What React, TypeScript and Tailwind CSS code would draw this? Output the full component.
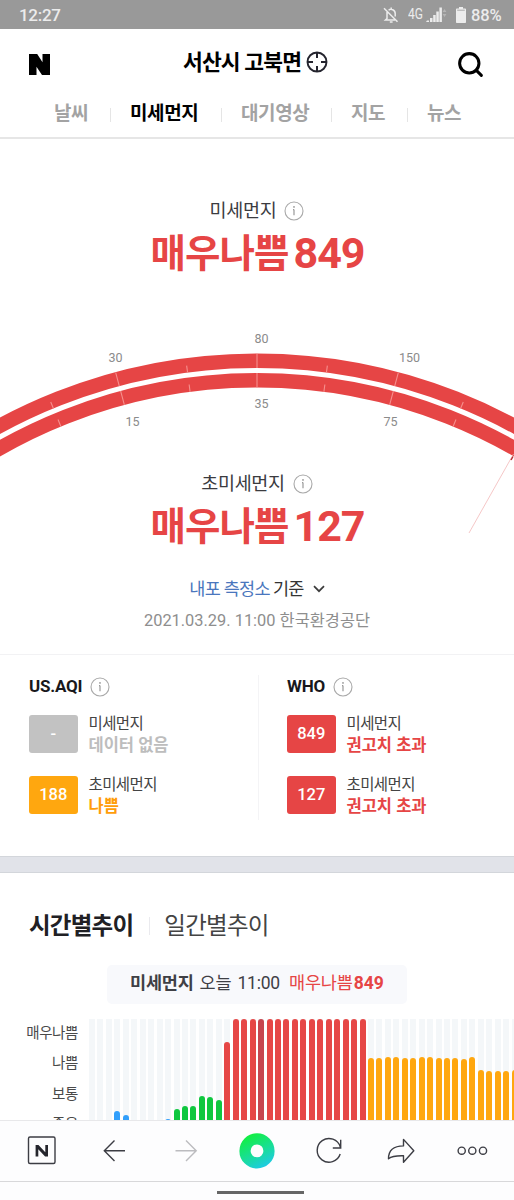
import { Search } from 'lucide-react';
import clsx from 'clsx';

type Level = 'good' | 'normal' | 'bad' | 'worst' | 'now';

const levelColor: Record<Level, string> = {
  good: 'bg-[#319ffb]',
  normal: 'bg-[#0fc73f]',
  bad: 'bg-[#ffa70f]',
  worst: 'bg-[#e64746]',
  now: 'bg-[#c6464f]',
};

// Height of each hourly bar above the bottom edge of the visible chart
const hourly: { h: number; level?: Level }[] = [
  { h: 0 }, { h: 0 }, { h: 0 },
  { h: 11, level: 'good' }, { h: 7, level: 'good' },
  { h: 0 }, { h: 0 }, { h: 0 }, { h: 0 },
  { h: 3, level: 'good' },
  { h: 13, level: 'normal' }, { h: 16, level: 'normal' }, { h: 16, level: 'normal' },
  { h: 26, level: 'normal' }, { h: 25, level: 'normal' }, { h: 22, level: 'normal' },
  { h: 80, level: 'worst' },
  ...Array.from({ length: 16 }, (_, i) => ({ h: 102.5, level: (i === 3 ? 'now' : 'worst') as Level })),
  ...[64, 64, 65, 65, 64, 64, 65, 64.5, 64, 63.5, 63.5, 63, 64.5, 52, 50.5, 51, 50.5, 52].map((h) => ({
    h,
    level: 'bad' as Level,
  })),
];

const tabs = [
  { name: '날씨', box: 'w-[111px] pl-[54px]' },
  { name: '미세먼지', box: 'w-[111px] pl-[19px]', active: true },
  { name: '대기영상', box: 'w-[110px] pl-[19px]' },
  { name: '지도', box: 'w-[76px] pl-[19px]' },
  { name: '뉴스', box: 'pl-[19px]', last: true },
];

const InfoIcon = ({ className }: { className?: string }) => (
  <svg viewBox="0 0 20 20" className={clsx('h-5 w-5 shrink-0', className)} fill="none">
    <circle cx="10" cy="10" r="9" stroke="#a9a9a9" strokeWidth="1.1" />
    <path d="M10 8.400V14.200M9 8.700h1" stroke="#999" strokeWidth="1.200" />
    <circle cx="10" cy="5.900" r=".9" fill="#999" />
  </svg>
);

const StatusBar = () => (
  <div className="flex h-[29px] items-center bg-[#999] pl-[19px] text-[#ececec]">
    <span className="w-[364px] text-[17px] font-medium leading-[30px] tracking-[-0.3px]">12:27</span>
    <svg viewBox="0 0 16 18" className="h-[18px] w-4" fill="none" stroke="currentColor" strokeWidth="1.500">
      <path d="M1 2.200 14.500 15.800M4 6v6.500l-1.500 1.400H12M5.600 4.200C7.800 2.300 12.200 3.800 12.200 7.600V10.500M8.200 3.200V1.500M6.800 15.900h2.800" />
    </svg>
    <span className="ml-[9px] w-[18px] origin-left scale-x-[.83] text-[14.500px] leading-[30px]">4G</span>
    <svg viewBox="0 0 22 18" className="h-[18px] w-[22px]" fill="currentColor">
      <path d="M1 14.500h2V16H0zM4 12h2.500v4H4zM7.200 9h2.500v7H7.200zM10.300 5.500h2.500v10.500h-2.500zM13.400 1.500h2.500v14.500h-2.500z" />
      <path d="m16.600 6 1.900-3 1.900 3zM16.600 8l1.900 3 1.900-3z" opacity=".35" />
    </svg>
    <svg viewBox="0 0 10 16" className="ml-[8px] h-4 w-[10px]" fill="currentColor">
      <path d="M3 0h4v1.500h2.200c.4 0 .8.4.8.8V15c0 .6-.4 1-.9 1H.9C.4 16 0 15.600 0 15V2.300c0-.4.4-.8.8-.8H3z" />
      <path d="M1.200 3.200h7.600" stroke="#999" strokeWidth=".8" />
    </svg>
    <span className="mt-[2px] ml-[5px] text-[16.500px] font-medium leading-[30px] tracking-[-0.100px]">88%</span>
  </div>
);

const Header = () => (
  <header className="h-[110px] border-b-2 border-[#e6e6e6]">
    <div className="flex h-[66px] items-center">
      <svg viewBox="0 0 21 21" className="mt-[5px] ml-[29px] h-[21px] w-[21px]">
        <path d="M0 0h8.200l5.300 8.200V0H21v21h-8L7.500 12.800V21H0z" />
      </svg>
      <h1 className="mt-[2px] ml-[133px] w-[123px] whitespace-nowrap text-[21.500px] font-bold leading-[30px] tracking-[-0.850px]">
        서산시 고북면
      </h1>
      <svg viewBox="0 0 22 22" className="h-[22px] w-[22px]" fill="none" stroke="#24242e" strokeWidth="1.900">
        <circle cx="11" cy="11" r="9.500" />
        <path d="M11 1.500V7M11 15v5.500M1.500 11H7M15 11h5.500" strokeWidth="2" />
      </svg>
      <Search className="mt-[4px] ml-[128px] h-[29px] w-[29px]" strokeWidth={2.5} />
    </div>
    <nav className="flex h-[38px] items-center text-[19px] font-bold leading-[30px] tracking-[-0.4px] text-[#a3a3a3]">
      {tabs.map((t) => (
        <div key={t.name} className={clsx('flex shrink-0 items-center justify-between', t.box)}>
          <span className={clsx('whitespace-nowrap', t.active && 'text-black')}>{t.name}</span>
          {!t.last && <i className="mt-[2px] h-[14px] w-px bg-[#e5e5e5]" />}
        </div>
      ))}
    </nav>
  </header>
);

const Reading = ({ label, value }: { label: string; value: number }) => (
  <div className="flex flex-col items-center">
    <div className="flex h-[30px] items-center text-[#3b3b3f]">
      <span className="mt-[2px] text-[18.500px] leading-[30px] tracking-[-0.3px]">{label}</span>
      <InfoIcon className="mt-[2px] ml-[8px]" />
    </div>
    <div className="mt-[2px] flex h-[52px] items-center pl-px font-bold text-[#e64545]">
      <span className="mt-[2px] text-[38.500px] leading-[52px] tracking-[-0.9px]">매우나쁨</span>
      <span className="ml-[5px] text-[43px] leading-[52px] tracking-[-1px]">{value}</span>
    </div>
  </div>
);

// Both dials share one centre, far below the visible part
const CX = 257;
const CY = 580;
const polar = (r: number, deg: number) => {
  const a = (deg * Math.PI) / 180;
  return `${CX + r * Math.sin(a)} ${CY - r * Math.cos(a)}`;
};

const Gauge = () => (
  <svg viewBox="0 0 514 220" className="block h-[220px] w-full">
    <g fill="none" stroke="#e64545" strokeWidth="14.500">
      <circle cx={CX} cy={CY} r="539.250" />
      <circle cx={CX} cy={CY} r="519.750" />
    </g>
    <g stroke="#f58f8d" strokeWidth="1.100">
      {[-15, 0, 15].map((d) => (
        <path key={d} d={`M${polar(546, d)}L${polar(532, d)}M${polar(527, d)}L${polar(512.5, d)}`} />
      ))}
      {[-22.5, -7.5, 7.5, 22.5].map((d) => (
        <path key={d} d={`M${polar(539, d)}L${polar(532, d)}M${polar(520, d)}L${polar(512.5, d)}`} />
      ))}
    </g>
    <path d="M513.500 134 469 213" stroke="#f3b9b9" strokeWidth=".8" />
    <path d="M513 136.500 511 140" stroke="#b52c35" strokeWidth="1.500" />
    <g fill="#8b8b8b" fontSize="12.500" textAnchor="middle">
      <text x="261.500" y="23">80</text>
      <text x="115.500" y="42">30</text>
      <text x="409.500" y="42">150</text>
      <text x="261.500" y="88">35</text>
      <text x="132.500" y="105.500">15</text>
      <text x="390.500" y="105.500">75</text>
    </g>
  </svg>
);

interface IndexRow {
  value: string;
  label: string;
  status: string;
  bg: string;
  text: string;
}

const IndexPanel = ({ title, rows }: { title: string; rows: IndexRow[] }) => (
  <>
    <div className="flex h-[24px] items-center">
      <span className="mb-px text-[17px] font-bold leading-[23px] tracking-[-0.2px] text-[#18181c]">{title}</span>
      <InfoIcon className="ml-[8px]" />
    </div>
    <div className="mt-[16px] flex flex-col gap-[23px]">
      {rows.map((r) => (
        <div key={r.label} className="flex h-[38px] items-center">
          <div className={clsx('flex h-[38px] w-[48.500px] items-center justify-center rounded-[3px] text-[16.500px] font-medium text-white', r.bg)}>
            {r.value}
          </div>
          <div className="mt-[2px] ml-[11px] whitespace-nowrap">
            <div className="text-[15.500px] leading-[21px] tracking-[-0.6px] text-[#444]">{r.label}</div>
            <div className={clsx('text-[16.500px] font-bold leading-[22px]', r.text)}>{r.status}</div>
          </div>
        </div>
      ))}
    </div>
  </>
);

const RED = { bg: 'bg-[#e64545]', text: 'text-[#e64545]' };

const Indexes = () => (
  <section className="flex h-[202px] border-t border-[#f2f2f4] pt-[20px]">
    <div className="w-[258px] shrink-0 pl-[29px]">
      <IndexPanel
        title="US.AQI"
        rows={[
          { value: '-', label: '미세먼지', status: '데이터 없음', bg: 'bg-[#c2c2c2]', text: 'text-[#bdbdbd]' },
          { value: '188', label: '초미세먼지', status: '나쁨', bg: 'bg-[#ffa70f]', text: 'text-[#ff9d0a]' },
        ]}
      />
    </div>
    <div className="h-[145px] border-l border-[#f4f4f6] pl-[28px]">
      <IndexPanel
        title="WHO"
        rows={[
          { value: '849', label: '미세먼지', status: '권고치 초과', ...RED },
          { value: '127', label: '초미세먼지', status: '권고치 초과', ...RED },
        ]}
      />
    </div>
  </section>
);

const Trend = () => (
  <section className="h-[247px] overflow-hidden">
    <div className="mt-[35px] ml-[29px] flex h-[36px] items-center text-[23.500px] leading-[36px] tracking-[-0.750px]">
      <span className="font-bold text-[#202024]">시간별추이</span>
      <i className="mr-[14px] ml-[16px] h-[18px] w-px bg-[#eaeaee]" />
      <span className="text-[#444]">일간별추이</span>
    </div>
    <div className="mt-[21px] ml-[107px] flex h-[39px] w-[300px] items-center rounded-[5px] bg-[#f8f9fc] pb-[2px] pl-[23px] text-[17.500px] leading-[37px] tracking-[-0.2px] text-[#3f4045]">
      <b>미세먼지</b>
      <span className="ml-[6px]">오늘</span>
      <span className="ml-[6px]">11:00</span>
      <span className="ml-[9px] text-[#e64545]">
        매우나쁨<b className="ml-px tracking-normal">849</b>
      </span>
    </div>
    <div className="mt-[15px] flex">
      <div className="w-[89px] pr-[11px] text-right text-[14.500px] leading-[30.300px] tracking-[-0.4px] text-[#4a4a4a]">
        <div className="h-[30.300px]">매우나쁨</div>
        <div className="h-[30.300px]">나쁨</div>
        <div className="h-[30.300px]">보통</div>
        <div className="h-0">좋음</div>
      </div>
      <div className="flex h-[102.500px] w-[425px] gap-[2.460px] overflow-hidden">
        {hourly.map((b, i) => (
          <div key={i} className="flex h-full w-[6px] shrink-0 items-end bg-[#f4f7f9]">
            {b.level && <div className={clsx('w-full rounded-t-[3px]', levelColor[b.level])} style={{ height: b.h }} />}
          </div>
        ))}
      </div>
    </div>
  </section>
);

const Toolbar = () => (
  <footer className="h-[80px] border-t border-[#e8e8ea] bg-[#fdfdfe]">
    <div className="h-[61px] border-b border-[#d8d8da]">
      <svg viewBox="0 0 514 60" className="block h-[60px] w-full" fill="none" stroke="#3c3d44" strokeWidth="1.400">
        <defs>
          <linearGradient id="ring" gradientUnits="userSpaceOnUse" x1="248" y1="13" x2="266" y2="48">
            <stop offset="0" stopColor="#12f03c" />
            <stop offset=".5" stopColor="#18df92" />
            <stop offset="1" stopColor="#1fc8ef" />
          </linearGradient>
        </defs>
        <rect x="28.500" y="16" width="26.500" height="26.500" rx="1.500" />
        <path d="M35.600 35.500V24h2.900l6.800 7.200V24h2.700v11.500h-2.900l-6.800-7.200v7.200z" fill="#25262d" stroke="none" />
        <path d="M125 29.700h-20.500M114.500 19.500 104.300 29.700l10.200 10.200" />
        <path d="M175.500 29.700H196M186 19.500l10.200 10.200L186 39.900" stroke="#bcbcbf" />
        <circle cx="257" cy="29.900" r="12" stroke="url(#ring)" strokeWidth="11.200" />
        <path d="M340.300 26A11.800 11.800 0 1 0 340.200 33M340.700 18.800V27H332.800" />
        <path d="M388.500 37.700C388.500 28.700 393.500 25 403.500 24.900V18.400L413.800 29.700 403.500 41.200V34.700C396 34.500 392 34.800 388.500 37.700z" strokeLinejoin="round" />
        <circle cx="461.700" cy="29.700" r="3.600" />
        <circle cx="472.300" cy="29.700" r="3.600" />
        <circle cx="483" cy="29.700" r="3.600" />
      </svg>
    </div>
    <div className="mx-auto mt-[9px] w-[87px] translate-x-[3px] border-t-[3px] border-[#666]" />
  </footer>
);

export default function App() {
  return (
    <div className="h-[1200px] w-[514px] overflow-hidden bg-white font-[Roboto,'Noto_Sans_CJK_KR',sans-serif]">
      <StatusBar />
      <Header />
      <main>
        <section className="h-[515px] pt-[56px]">
          <Reading label="미세먼지" value={849} />
          <div className="mt-[41px] h-[148px]">
            <Gauge />
          </div>
          <Reading label="초미세먼지" value={127} />
          <div className="mt-[21px] flex h-[32px] items-center justify-center text-[17.500px] leading-[32px] tracking-[-0.7px]">
            <span className="text-[#4a76bd]">내포 측정소</span>
            <span className="ml-[3px] text-[#333]">기준</span>
            <svg viewBox="0 0 12 8" className="ml-[9px] h-2 w-3" fill="none" stroke="#3c3c3c" strokeWidth="1.700">
              <path d="m1 1.200 5 5 5-5" />
            </svg>
          </div>
          <div className="h-[32px] text-center text-[16.400px] leading-[32px] text-[#8e8e8e]">2021.03.29. 11:00 한국환경공단</div>
        </section>
        <Indexes />
        <div className="h-[17px] border-y border-[#d3d6db] bg-[#e1e3e9]" />
        <Trend />
      </main>
      <Toolbar />
    </div>
  );
}
